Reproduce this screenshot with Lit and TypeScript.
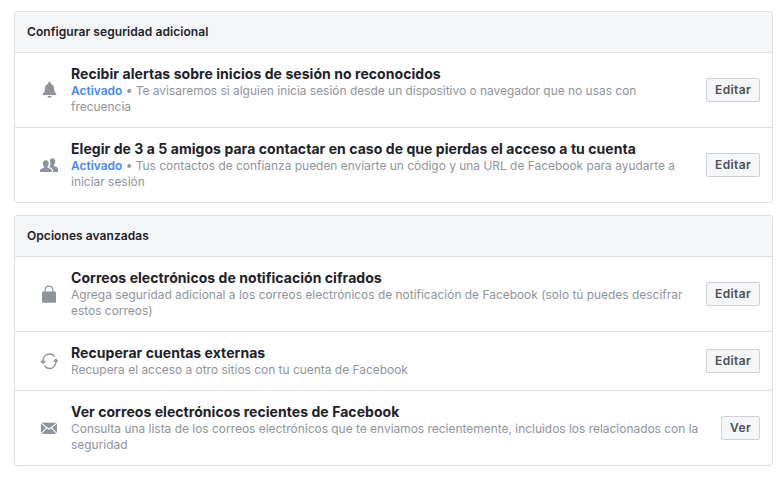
import { LitElement, html, css, svg } from "lit";
import { customElement } from "lit/decorators.js";

const icons: Record<string, unknown> = {
  bell: svg`<path d="M9.500 .8c.7 0 1.200.5 1.200 1.200v.7c2.300.6 3.400 2.500 3.400 5 0 2.600.8 3.800 2.100 5 .5.500.2 1.300-.5 1.300H3.300c-.7 0-1-.8-.5-1.300 1.300-1.200 2.100-2.400 2.100-5 0-2.500 1.100-4.400 3.400-5V2c0-.7.500-1.200 1.200-1.200z"/><path d="M7.500 15h4c-.2 1-1 1.700-2 1.700s-1.800-.7-2-1.700z"/>`,
  people: svg`<path d="M5.800 4.200c1.800 0 3 1.400 3 3.300 0 1.300-.6 2.400-1.300 3v1.300c2 .5 3.800 1.300 4.200 2.300V16H0v-1.900c.4-1 2.200-1.800 4.100-2.300v-1.300c-.7-.6-1.300-1.700-1.300-3 0-1.900 1.200-3.300 3-3.300z"/><path d="M12.300 2.200c1.800 0 3 1.400 3 3.300 0 1.300-.6 2.500-1.300 3.100v1.600c1.800.4 3.500 1.200 4 2.200V16h-5.100v-2.300c-.5-1.100-2-2-3.700-2.600v-.2c.7-.8 1.200-2 1.200-3.400 0-1-.3-1.900-.8-2.700.4-1.500 1.400-2.600 2.700-2.600z"/>`,
  lock: svg`<path fill-rule="evenodd" d="M2 8c0-.8.6-1.400 1.400-1.400h1.200V5c0-2.800 1.900-4.500 4.400-4.500s4.400 1.700 4.400 4.500v1.600h1.200c.8 0 1.400.6 1.400 1.400v8.400c0 .8-.6 1.400-1.400 1.400H3.400c-.8 0-1.400-.6-1.400-1.400V8zM5.800 6.600h6.400V5c0-2-1.300-3.200-3.200-3.200S5.800 3 5.800 5v1.600z"/>`,
  sync: svg`<path fill="none" stroke="currentColor" stroke-width="1.300" d="M3 10C2.500 5.800 5.300 2 9.500 2c2.200 0 4 1 5.100 2.800M15.900 8.500C16.400 12.700 13.600 16.500 9.400 16.500c-2.200 0-4-1-5.100-2.800"/><path d="M0 8.800l3 3.400 3-3.400zM12.900 9.700l3-3.400 3 3.400z"/>`,
  mail: svg`<rect x="1" y="3.700" width="16" height="11.300"/><path fill="none" stroke="#fff" stroke-width="1.100" d="M.8 3.900L9 10.300l8.200-6.400M.8 15.200L6.700 8.700M17.200 15.200L11.300 8.700"/>`,
};

interface Row {
  icon: string;
  title: string;
  on?: boolean;
  desc: string;
  action: string;
}

const section1: Row[] = [
  {
    icon: "bell",
    title: "Recibir alertas sobre inicios de sesión no reconocidos",
    on: true,
    desc: "Te avisaremos si alguien inicia sesión desde un dispositivo o navegador que no usas con frecuencia",
    action: "Editar",
  },
  {
    icon: "people",
    title: "Elegir de 3 a 5 amigos para contactar en caso de que pierdas el acceso a tu cuenta",
    on: true,
    desc: "Tus contactos de confianza pueden enviarte un código y una URL de Facebook para ayudarte a iniciar sesión",
    action: "Editar",
  },
];

const section2: Row[] = [
  {
    icon: "lock",
    title: "Correos electrónicos de notificación cifrados",
    desc: "Agrega seguridad adicional a los correos electrónicos de notificación de Facebook (solo tú puedes descifrar estos correos)",
    action: "Editar",
  },
  {
    icon: "sync",
    title: "Recuperar cuentas externas",
    desc: "Recupera el acceso a otro sitios con tu cuenta de Facebook",
    action: "Editar",
  },
  {
    icon: "mail",
    title: "Ver correos electrónicos recientes de Facebook",
    desc: "Consulta una lista de los correos electrónicos que te enviamos recientemente, incluidos los relacionados con la seguridad",
    action: "Ver",
  },
];

@customElement("app-root")
export class AppRoot extends LitElement {
  static styles = css`
    :host {
      display: block;
      width: 784px;
      height: 480px;
      box-sizing: border-box;
      padding: 11px 11px 0 14px;
      background: #fff;
      font-family: Inter, "Liberation Sans", sans-serif;
      overflow: hidden;
    }
    .card {
      border: 1px solid #dddfe2;
      border-radius: 3px;
      margin-bottom: 12px;
      overflow: hidden;
    }
    .head {
      height: 41px;
      box-sizing: border-box;
      display: flex;
      align-items: center;
      padding: 0 12px 2px;
      background: #f5f6f7;
      border-bottom: 1px solid #dddfe2;
      font-size: 12px;
      font-weight: 600;
      letter-spacing: 0.07px;
      color: #1d2129;
    }
    .head + .row {
      border-top: 0;
    }
    .row {
      display: flex;
      align-items: center;
      padding: 12px 12px 12px 0;
      border-top: 1px solid #dddfe2;
    }
    .icon {
      flex: none;
      width: 56px;
      display: flex;
      justify-content: center;
      padding-left: 12px;
      box-sizing: border-box;
      color: #8d949e;
    }
    .icon svg {
      display: block;
      fill: currentColor;
    }
    .text {
      flex: 1;
      min-width: 0;
      padding-right: 8px;
    }
    .title {
      font-size: 14px;
      line-height: 18px;
      font-weight: 700;
      letter-spacing: 0.055px;
      color: #1d2129;
    }
    .desc {
      font-size: 11.95px;
      line-height: 16px;
      color: #90949c;
    }
    .on {
      color: #4688f0;
      font-weight: 600;
    }
    button {
      flex: none;
      height: 24px;
      box-sizing: border-box;
      padding: 0 8px 2px;
      border: 1px solid #ccd0d5;
      border-radius: 2px;
      background: #f5f6f7;
      color: #4b4f56;
      font: 600 12px Inter, "Liberation Sans", sans-serif;
      letter-spacing: 0.35px;
    }
  `;

  private renderRow(r: Row) {
    return html`<div class="row">
      <div class="icon">
        <svg width="18" height="18" viewBox="0 0 18 18">${icons[r.icon]}</svg>
      </div>
      <div class="text">
        <div class="title">${r.title}</div>
        <div class="desc">
          ${r.on ? html`<span class="on">Activado</span> • ` : ""}${r.desc}
        </div>
      </div>
      <button>${r.action}</button>
    </div>`;
  }

  render() {
    return html`
      <div class="card">
        <div class="head">Configurar seguridad adicional</div>
        ${section1.map((r) => this.renderRow(r))}
      </div>
      <div class="card">
        <div class="head">Opciones avanzadas</div>
        ${section2.map((r) => this.renderRow(r))}
      </div>
    `;
  }
}
